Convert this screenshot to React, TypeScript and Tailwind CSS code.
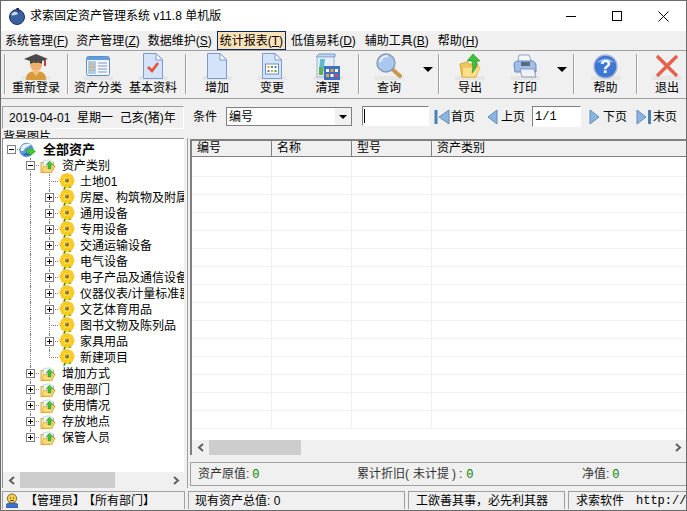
import type { ReactNode } from "react";

const FONT = "font-['Liberation_Sans','Noto_Sans_CJK_SC',sans-serif]";

const Sep = () => (
  <div className="mt-[3px] h-[40px] w-[2px] shrink-0 border-l border-r border-l-[#a0a0a0] border-r-white" />
);

function Flower() {
  return (
    <svg width="16" height="18" viewBox="0 0 16 18" className="shrink-0">
      <path d="M8 11 C7.5 14 6.5 16.5 4.5 17.5 C4 15 5.5 12.5 8 11 Z" fill="#2e9a22" />
      <path d="M8 12 C10 12 12 13 12.5 14.5 C10.5 15.5 8.5 14.5 8 12 Z" fill="#46b52e" />
      {[0, 45, 90, 135, 180, 225, 270, 315].map((a) => (
        <circle key={a} cx="8" cy="2.8" r="2.6" fill="#ffd21f" stroke="#f0a000" strokeWidth="0.4" transform={`rotate(${a} 8 7.5)`} />
      ))}
      <circle cx="8" cy="7.5" r="3.6" fill="#ffdc3a" />
      <circle cx="8" cy="7.5" r="1.9" fill="#6a6650" />
      <circle cx="7.5" cy="7" r="0.7" fill="#c8c0a0" />
    </svg>
  );
}

function FolderArrow() {
  return (
    <svg width="16" height="15" viewBox="0 0 16 15" className="shrink-0">
      <path d="M1 3.5 L1 13.5 L11.5 13.5 L15 7 L13.5 7 L13.5 3.5 Z" fill="#fbe7a0" stroke="#e0a030" strokeWidth="1" />
      <path d="M3.5 1.5 L10 0.8 L13 3 L13 9 L3.5 10 Z" fill="#f2f6fb" stroke="#a8bccf" strokeWidth="0.5" />
      <path d="M1.5 13 L4 7.5 L15 7 L11.5 13.5 Z" fill="#fcd978" stroke="#e0a030" strokeWidth="0.7" />
      <path d="M9.5 2 L13 5.8 L11 5.8 L11 10 L8 10 L8 5.8 L6 5.8 Z" fill="#3fc238" stroke="#1f8d1f" strokeWidth="0.4" />
    </svg>
  );
}

function GlobeArrow() {
  return (
    <svg width="17" height="16" viewBox="0 0 17 16" className="shrink-0">
      <circle cx="7.5" cy="8" r="6.8" fill="#5b9be4" stroke="#3a70bd" strokeWidth="0.6" />
      <path d="M2 5 C4 2 9 0.8 12 2.8 C10.5 4.5 7 4.5 5.5 7 C4.5 9.5 3 9.5 1.6 8.5 Z" fill="#eaf3fc" />
      <path d="M4 13 C7 14 10 13.5 12 12 L8 10 Z" fill="#2f62b4" />
      <path d="M11 5 L16.5 9.5 L11 14 L11 11.5 L7.5 11.5 L7.5 7.5 L11 7.5 Z" fill="#45c23e" stroke="#1f8d1f" strokeWidth="0.4" />
    </svg>
  );
}

function Expander({ open }: { open: boolean }) {
  return (
    <span className="absolute top-[3px] flex h-[9px] w-[9px] items-center justify-center border border-[#808080] bg-white" style={{ left: -4 }}>
      <span className="absolute h-px w-[5px] bg-black" />
      {!open && <span className="absolute h-[5px] w-px bg-black" />}
    </span>
  );
}

type Node = {
  x: number;
  label: string;
  icon: "globe" | "folder" | "flower";
  exp?: "open" | "closed";
  bold?: boolean;
  lines: number[];
  elbowHalf?: boolean;
};

const l2 = [30, 49];
const l1 = [30];
const nodes: Node[] = [
  { x: 11, label: "全部资产", icon: "globe", exp: "open", bold: true, lines: [] },
  { x: 30, label: "资产类别", icon: "folder", exp: "open", lines: l1 },
  { x: 49, label: "土地01", icon: "flower", lines: l2 },
  { x: 49, label: "房屋、构筑物及附属设施", icon: "flower", exp: "closed", lines: l2 },
  { x: 49, label: "通用设备", icon: "flower", exp: "closed", lines: l2 },
  { x: 49, label: "专用设备", icon: "flower", exp: "closed", lines: l2 },
  { x: 49, label: "交通运输设备", icon: "flower", exp: "closed", lines: l2 },
  { x: 49, label: "电气设备", icon: "flower", exp: "closed", lines: l2 },
  { x: 49, label: "电子产品及通信设备", icon: "flower", exp: "closed", lines: l2 },
  { x: 49, label: "仪器仪表/计量标准器具", icon: "flower", exp: "closed", lines: l2 },
  { x: 49, label: "文艺体育用品", icon: "flower", exp: "closed", lines: l2 },
  { x: 49, label: "图书文物及陈列品", icon: "flower", lines: l2 },
  { x: 49, label: "家具用品", icon: "flower", exp: "closed", lines: l2 },
  { x: 49, label: "新建项目", icon: "flower", lines: l2, elbowHalf: true },
  { x: 30, label: "增加方式", icon: "folder", exp: "closed", lines: l1 },
  { x: 30, label: "使用部门", icon: "folder", exp: "closed", lines: l1 },
  { x: 30, label: "使用情况", icon: "folder", exp: "closed", lines: l1 },
  { x: 30, label: "存放地点", icon: "folder", exp: "closed", lines: l1 },
  { x: 30, label: "保管人员", icon: "folder", exp: "closed", lines: l1, elbowHalf: true },
];

function TreeRow({ node }: { node: Node }) {
  return (
    <div className="relative flex h-[16px] items-center whitespace-nowrap">
      {node.lines.map((lx, i) => (
        <span
          key={lx}
          className={`absolute top-0 w-0 border-l border-dotted border-[#808080] ${
            node.elbowHalf && i === node.lines.length - 1 ? "h-[8px]" : "h-[16px]"
          }`}
          style={{ left: lx - 3 }}
        />
      ))}
      <span className="absolute top-[7px] h-0 w-[9px] border-t border-dotted border-[#808080]" style={{ left: node.x - 3 }} />
      <span className="absolute top-0 h-[16px]" style={{ left: node.x - 3 }}>
        {node.exp && <Expander open={node.exp === "open"} />}
      </span>
      <span className="flex items-center" style={{ marginLeft: node.x + (node.x === 11 ? 8 : 10) - 3 }}>
        {node.icon === "globe" && <GlobeArrow />}
        {node.icon === "folder" && <FolderArrow />}
        {node.icon === "flower" && <Flower />}
      </span>
      <span
        className={node.bold ? "text-[13px] font-bold text-black" : "text-[12px] text-black"}
        style={{ marginLeft: node.icon === "flower" ? 5 : node.icon === "globe" ? 7 : 6 }}
      >
        {node.label}
      </span>
    </div>
  );
}

function ToolBtn({ w, label, children }: { w: string; label: string; children: ReactNode }) {
  return (
    <div className={`flex shrink-0 flex-col items-center ${w}`}>
      <div className="relative flex h-[29px] items-center justify-center pt-[1px]">
        <span className="absolute bottom-0 left-1/2 h-[4px] w-[30px] -translate-x-1/2 rounded-full bg-[#e6e6e6]" />
        <span className="relative flex">{children}</span>
      </div>
      <span className="mt-[1px] text-[12px] leading-[14px] text-black">{label}</span>
    </div>
  );
}

const Drop = ({ w }: { w: string }) => (
  <div className={`flex h-[44px] shrink-0 items-center justify-center ${w}`}>
    <span className="mb-[7px] h-0 w-0 border-l-[5px] border-r-[5px] border-t-[5px] border-l-transparent border-r-transparent border-t-black" />
  </div>
);

function DocBase({ children }: { children?: ReactNode }) {
  return (
    <svg width="20" height="26" viewBox="0 0 20 26">
      <path d="M0.5 0.5 L13 0.5 L19.5 7 L19.5 25.5 L0.5 25.5 Z" fill="#d5e3fa" stroke="#7b9ad0" />
      <path d="M13 0.5 L13 7 L19.5 7 Z" fill="#fff" stroke="#7b9ad0" />
      {children}
    </svg>
  );
}

const ArrowBtn = ({ dir, bar }: { dir: "l" | "r"; bar?: boolean }) => (
  <svg width={bar ? 16 : 11} height="16" viewBox={bar ? "0 0 16 16" : "0 0 11 16"} className="shrink-0">
    {dir === "l" ? (
      <>
        {bar && <rect x="0.5" y="1" width="3" height="14" fill="#4a7fb8" />}
        <path d={bar ? "M15 1 L5 8 L15 15 Z" : "M10 1 L1 8 L10 15 Z"} fill="#8db4dc" stroke="#5f8fc0" />
      </>
    ) : (
      <>
        <path d="M1 1 L10 8 L1 15 Z" fill="#8db4dc" stroke="#5f8fc0" />
        {bar && <rect x="12" y="1" width="3" height="14" fill="#4a7fb8" />}
      </>
    )}
  </svg>
);

const Chev = ({ dir }: { dir: "l" | "r" }) => (
  <svg width="8" height="9" viewBox="0 0 8 9" className="shrink-0">
    <path d={dir === "l" ? "M6 1 L2 4.5 L6 8" : "M2 1 L6 4.5 L2 8"} fill="none" stroke="#606060" strokeWidth="2" />
  </svg>
);

function Sunken({ className, children }: { className: string; children?: ReactNode }) {
  return <div className={`border border-b-white border-l-[#808080] border-r-white border-t-[#808080] ${className}`}>{children}</div>;
}

const menus = [
  ["系统管理", "F"],
  ["资产管理", "Z"],
  ["数据维护", "S"],
  ["统计报表", "T"],
  ["低值易耗", "D"],
  ["辅助工具", "B"],
  ["帮助", "H"],
];

export default function App() {
  return (
    <div className={`flex h-[511px] w-[687px] flex-col overflow-hidden border border-[#6a6a6a] bg-[#f0f0f0] ${FONT}`}>
      {/* title bar */}
      <div className="flex h-[30px] shrink-0 items-center bg-white pl-[7px]">
        <svg width="18" height="18" viewBox="0 0 18 18" className="shrink-0">
          <circle cx="9" cy="10" r="7.5" fill="#3a5f9e" stroke="#1f2f58" />
          <path d="M3 8 C5 4 9 4 10 7 C8 8 5 9 3 8 Z" fill="#c4d6f0" />
          <path d="M8 1 L11 1 L11 6 Z" fill="#1f2f58" />
        </svg>
        <span className="ml-[4px] text-[12px] text-black">求索固定资产管理系统 v11.8 单机版</span>
        <div className="ml-auto flex h-full items-center">
          <div className="flex w-[46px] justify-center">
            <span className="h-px w-[10px] bg-black" />
          </div>
          <div className="flex w-[46px] justify-center">
            <span className="h-[10px] w-[10px] border border-black" />
          </div>
          <div className="flex w-[46px] justify-center">
            <svg width="11" height="11" viewBox="0 0 11 11">
              <path d="M0.5 0.5 L10.5 10.5 M10.5 0.5 L0.5 10.5" stroke="#000" />
            </svg>
          </div>
        </div>
      </div>

      {/* menu */}
      <div className="flex h-[20px] shrink-0 items-center border-b border-[#a0a0a0] pl-[1px]">
        {menus.map(([m, k]) => (
          <span
            key={m}
            className={`flex h-[19px] items-center whitespace-nowrap text-[12px] text-black ${
              k === "D" || k === "B" ? "mr-[3px]" : "mr-[2px]"
            } ${k === "T" ? "border border-[#0a246a] bg-[#ffe3b8] px-[2px]" : "px-[3px]"}`}
          >
            {m}(<span className="underline">{k}</span>)
          </span>
        ))}
      </div>

      {/* toolbar */}
      <div className="flex h-[48px] shrink-0 border-b border-[#a0a0a0] pl-[3px]">
        <Sep />
        <ToolBtn w="w-[60px]" label="重新登录">
          <svg width="26" height="27" viewBox="0 0 26 27">
            <path d="M3 27 C3 20 7 18 13 18 C19 18 23 20 23 27 Z" fill="#d99a3c" />
            <path d="M9 18 L13 23 L17 18 Z" fill="#f3c27a" />
            <circle cx="13" cy="12" r="6" fill="#eeb06c" />
            <path d="M1 6 L13 1 L25 6 L13 10 Z" fill="#4a4a4a" />
            <path d="M7 8 L7 10.5 C10 9 16 9 19 10.5 L19 8 L13 10 Z" fill="#2a2a2a" />
            <path d="M22 7 L22 13" stroke="#b84040" strokeWidth="2" />
          </svg>
        </ToolBtn>
        <div className="w-px shrink-0" />
        <Sep />
        <ToolBtn w="w-[58px]" label="资产分类">
          <svg width="24" height="20" viewBox="0 0 24 20">
            <rect x="0.5" y="0.5" width="23" height="19" rx="2" fill="#f3f7fd" stroke="#5f8fc0" />
            <rect x="1" y="1" width="22" height="3" fill="#5f9fe0" />
            <rect x="2" y="5" width="8" height="13" fill="#a8cdf2" />
            <path d="M3 8 H9 M3 11 H9 M3 14 H9" stroke="#f0a040" />
            <path d="M12 7 H21 M12 10 H21 M12 13 H21 M12 16 H21" stroke="#7f97b8" />
          </svg>
        </ToolBtn>
        <ToolBtn w="w-[52px]" label="基本资料">
          <DocBase>
            <path d="M5 14 L9 18 L15 10" fill="none" stroke="#e8503a" strokeWidth="2.6" />
          </DocBase>
        </ToolBtn>
        <div className="w-[6px] shrink-0" />
        <Sep />
        <ToolBtn w="w-[60px]" label="增加">
          <DocBase />
        </ToolBtn>
        <ToolBtn w="w-[50px]" label="变更">
          <DocBase>
            <rect x="3.5" y="11" width="13" height="10" fill="#fff" stroke="#6f8fb8" />
            <path d="M5.5 13 H7.5 V15 H5.5 Z" fill="#e8a030" />
            <path d="M9 13 H11 V15 H9 Z" fill="#50a050" />
            <path d="M12.5 13 H14.5 V15 H12.5 Z" fill="#4a7fd0" />
            <path d="M5.5 17 H7.5 V19 H5.5 Z" fill="#4a7fd0" />
            <path d="M9 17 H11 V19 H9 Z" fill="#e8a030" />
            <path d="M12.5 17 H14.5 V19 H12.5 Z" fill="#50a050" />
          </DocBase>
        </ToolBtn>
        <ToolBtn w="w-[61px]" label="清理">
          <svg width="26" height="27" viewBox="0 0 26 27">
            <path d="M1 4 L4 1 L20 1 L20 4 Z" fill="#bcd8ee" stroke="#7b9ad0" />
            <rect x="2" y="4" width="17" height="20" fill="#e6eef7" stroke="#9ab4d0" />
            <path d="M5 6 L10 6 L8 22 L4 22 Z" fill="#60b8d0" />
            <path d="M4 14 L8 14 L8 22 L4 22 Z" fill="#60b050" />
            <rect x="9" y="13" width="16" height="14" fill="#3f6fc0" />
            <rect x="11" y="16" width="3" height="3" fill="#fff" />
            <rect x="15.5" y="16" width="3" height="3" fill="#f0a040" />
            <rect x="20" y="16" width="3" height="3" fill="#fff" />
            <rect x="11" y="21" width="3" height="3" fill="#f0a040" />
            <rect x="15.5" y="21" width="3" height="3" fill="#fff" />
            <rect x="20" y="21" width="3" height="3" fill="#d05050" />
          </svg>
        </ToolBtn>
        <Sep />
        <ToolBtn w="w-[58px]" label="查询">
          <svg width="26" height="26" viewBox="0 0 26 26">
            <path d="M16 16 L24 23" stroke="#c89a50" strokeWidth="4" strokeLinecap="round" />
            <circle cx="10" cy="10" r="9" fill="#a8c8f0" stroke="#8a9ab0" strokeWidth="1.4" />
            <path d="M4 9 C5 5 8 3 12 3" fill="none" stroke="#eaf3fd" strokeWidth="2" />
          </svg>
        </ToolBtn>
        <Drop w="w-[20px]" />
        <Sep />
        <ToolBtn w="w-[60px]" label="导出">
          <svg width="23" height="26" viewBox="0 0 23 26">
            <path d="M1 11 L8 9 L10 11 L19 11 L17 24 L3 24 Z" fill="#f0c860" stroke="#d9a436" />
            <path d="M4 14 L21 14 L17 24 L3 24 Z" fill="#fbe08a" stroke="#e0b040" strokeWidth="0.7" />
            <path d="M14 1 L21 8 L18 8 C18 14 16 17 13 20 C14 15 14 12 13 8 L8 8 Z" fill="#3fbf3a" stroke="#1f8d1f" strokeWidth="0.6" />
          </svg>
        </ToolBtn>
        <ToolBtn w="w-[50px]" label="打印">
          <svg width="24" height="25" viewBox="0 0 24 25">
            <path d="M6 1 L16 1 L19 8 L5 8 Z" fill="#f4f6fa" stroke="#8fa4c0" />
            <path d="M1 10 C1 8 4 7 6 7 L19 7 C21 7 23 9 23 12 L23 18 L2 18 Z" fill="#9fbfe8" stroke="#5f87c0" />
            <rect x="8" y="8" width="9" height="4" fill="#5a6a80" />
            <path d="M7 15 L21 15 L23 23 L9 23 Z" fill="#eef2f8" stroke="#8a9ab0" />
          </svg>
        </ToolBtn>
        <Drop w="w-[23px]" />
        <Sep />
        <ToolBtn w="w-[61px]" label="帮助">
          <svg width="25" height="25" viewBox="0 0 25 25">
            <circle cx="12.5" cy="12.5" r="11.5" fill="#3f76d4" stroke="#a8b8d8" strokeWidth="1.4" />
            <path d="M4 9 C7 3 18 3 21 9 C16 7 9 7 4 9 Z" fill="#8db4ec" />
            <text x="12.5" y="19" textAnchor="middle" fontSize="18" fontWeight="700" fill="#fff" fontFamily="Liberation Sans">?</text>
          </svg>
        </ToolBtn>
        <Sep />
        <ToolBtn w="w-[58px]" label="退出">
          <svg width="24" height="24" viewBox="0 0 24 24">
            <path d="M2 2 L22 22 M22 2 L2 22" stroke="#e8604a" strokeWidth="3.4" />
          </svg>
        </ToolBtn>
      </div>

      {/* filter row */}
      <div className="flex h-[31px] shrink-0 items-start pl-[1px] pt-[7px] text-[12px] leading-[16px] text-black">
        <div className="flex h-[23px] w-[182px] shrink-0 items-center whitespace-nowrap border border-b-white border-l-[#a0a0a0] border-r-white border-t-[#a0a0a0] pl-[6px]">
          2019-04-01&nbsp;&nbsp;星期一&nbsp;&nbsp;己亥(猪)年
        </div>
        <span className="ml-[9px] mt-[3px] shrink-0">条件</span>
        <div className="ml-[9px] mt-[1px] flex h-[19px] w-[126px] shrink-0 items-center border border-[#808080] bg-white pl-[2px]">
          编号
          <span className="ml-auto flex h-full w-[16px] items-center justify-center bg-[#f0f0f0]">
            <span className="h-0 w-0 border-l-[4px] border-r-[4px] border-t-[4px] border-l-transparent border-r-transparent border-t-black" />
          </span>
        </div>
        <Sunken className="ml-[10px] flex h-[20px] w-[67px] shrink-0 items-center bg-white pl-[1px]">
          <span className="h-[14px] w-px bg-black" />
        </Sunken>
        <div className="ml-[5px] mt-[3px] flex w-[15px] shrink-0"><ArrowBtn dir="l" bar /></div>
        <span className="ml-[2px] mt-[3px] shrink-0">首页</span>
        <div className="ml-[12px] mt-[3px] shrink-0"><ArrowBtn dir="l" /></div>
        <span className="ml-[3px] mt-[3px] shrink-0">上页</span>
        <Sunken className="ml-[7px] flex h-[21px] w-[49px] shrink-0 items-center bg-white pl-[2px] font-['Liberation_Mono']">
          1/1
        </Sunken>
        <div className="ml-[8px] mt-[3px] shrink-0"><ArrowBtn dir="r" /></div>
        <span className="ml-[3px] mt-[3px] shrink-0">下页</span>
        <div className="ml-[9px] mt-[3px] shrink-0"><ArrowBtn dir="r" bar /></div>
        <span className="ml-[1px] mt-[3px] shrink-0">末页</span>
      </div>

      {/* clipped caption */}
      <div className="h-[8px] shrink-0 overflow-hidden pl-[2px] text-[12px] leading-[14px] text-black">背景图片</div>

      {/* main */}
      <div className="flex min-h-0 flex-1">
        <div className="ml-[1px] flex w-[182px] shrink-0 flex-col border-l border-t border-[#909090] bg-white">
          <div className="min-h-0 flex-1 overflow-hidden pt-[3px]">
            {nodes.map((n) => (
              <TreeRow key={n.label} node={n} />
            ))}
          </div>
          <div className="flex h-[16px] shrink-0 items-center bg-[#f0f0f0]">
            <span className="flex w-[17px] shrink-0 justify-center"><Chev dir="l" /></span>
            <span className="h-full w-[95px] bg-[#cdcdcd]" />
            <span className="ml-auto flex w-[17px] shrink-0 justify-center"><Chev dir="r" /></span>
          </div>
        </div>

        <div className="ml-[3px] w-[3px] shrink-0 border-l border-[#a0a0a0]" />

        <div className="flex min-w-0 flex-1 flex-col pt-[1px]">
          <div className="flex h-[301px] shrink-0 flex-col overflow-hidden border-l-2 border-t-2 border-[#808080] bg-white">
            <div className="flex h-[16px] shrink-0 bg-[#f0f0f0] text-[12px] leading-[15px] text-black">
              {["编号", "名称", "型号"].map((c) => (
                <div key={c} className="w-[80px] shrink-0 border-b border-r border-[#808080] pl-[5px]">{c}</div>
              ))}
              <div className="flex-1 border-b border-[#808080] pl-[5px]">资产类别</div>
            </div>
            <div className="min-h-0 flex-1 pt-[2px]">
              {Array.from({ length: 15 }, (_, i) => (
                <div key={i} className="flex h-[18px] border-b border-[#f0f0f0]">
                  <div className="w-[80px] shrink-0 border-r border-[#f0f0f0]" />
                  <div className="w-[80px] shrink-0 border-r border-[#f0f0f0]" />
                  <div className="w-[80px] shrink-0 border-r border-[#f0f0f0]" />
                </div>
              ))}
            </div>
          </div>
          <div className="flex h-[15px] shrink-0 items-center border-l-2 border-[#808080] bg-[#f0f0f0]">
            <span className="flex w-[17px] shrink-0 justify-center"><Chev dir="l" /></span>
            <span className="h-full w-[92px] bg-[#cdcdcd]" />
            <span className="ml-auto flex w-[17px] shrink-0 justify-center"><Chev dir="r" /></span>
          </div>
          <div className="h-[7px] shrink-0" />
          <div className="flex h-[24px] shrink-0 items-center border-y border-l border-[#a0a0a0] text-[12px] text-[#303030]">
            <span className="ml-[7px] w-[159px]">资产原值:<span className="ml-[3px] font-['Liberation_Mono'] text-[#008000]">0</span></span>
            <span className="w-[225px] whitespace-nowrap">
              累计折旧(<span className="ml-[4px]">未计提</span>
              <span className="ml-[3px]">)</span>
              <span className="ml-[3px]">:</span>
              <span className="ml-[4px] font-['Liberation_Mono'] text-[#008000]">0</span>
            </span>
            <span>净值:<span className="ml-[3px] font-['Liberation_Mono'] text-[#008000]">0</span></span>
          </div>
        </div>
      </div>

      {/* status bar */}
      <div className="mb-[1px] mt-[3px] flex h-[18px] shrink-0 gap-[3px] pl-[1px] text-[12px] text-black">
        <div className="flex w-[183px] shrink-0 items-center border border-b-0 border-[#a0a0a0] pl-[3px]">
          <svg width="12" height="15" viewBox="0 0 12 15" className="shrink-0">
            <path d="M0.5 15 L0.5 11 L4 9.5 L8 9.5 L11.5 11 L11.5 15 Z" fill="#3a6fd0" stroke="#1f3f90" strokeWidth="0.6" />
            <circle cx="6" cy="5.5" r="4.6" fill="#f8d24a" stroke="#5a4a10" strokeWidth="0.8" />
            <path d="M4 5 H5 M7 5 H8 M4.5 7.5 H7.5" stroke="#222" />
          </svg>
          <span className="ml-[7px] whitespace-nowrap">【管理员】<span className="ml-[4px]">【所有部门】</span></span>
        </div>
        <div className="flex w-[217px] shrink-0 items-center border border-b-0 border-[#a0a0a0] pl-[6px]">现有资产总值: 0</div>
        <div className="flex w-[157px] shrink-0 items-center whitespace-nowrap border border-b-0 border-[#a0a0a0] pl-[7px]">工欲善其事，必先利其器</div>
        <div className="flex min-w-0 flex-1 items-center overflow-hidden whitespace-nowrap border-l border-t border-[#a0a0a0] pl-[7px]">
          求索软件<span className="ml-[12px] font-['Liberation_Mono']">http://www.qiusuo.com</span>
        </div>
      </div>
    </div>
  );
}
